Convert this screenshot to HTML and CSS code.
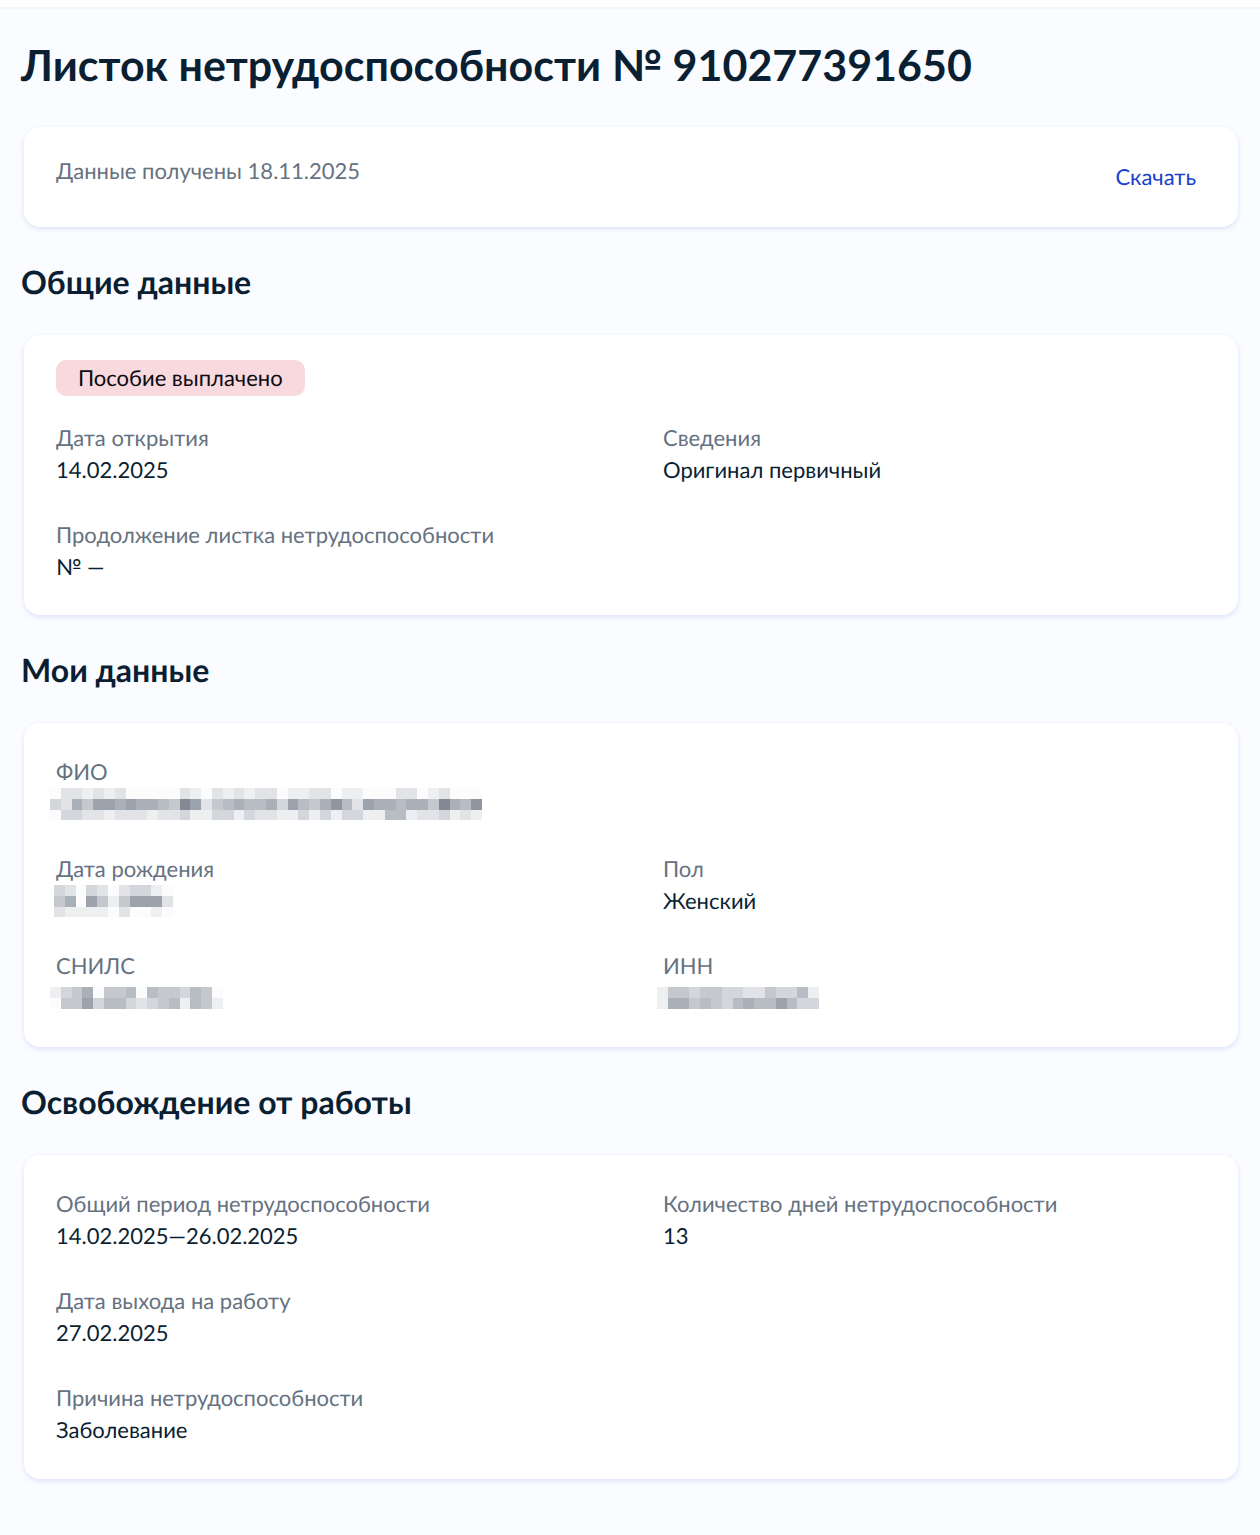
FILE: index.html
```html
<!DOCTYPE html>
<html lang="ru">

<head>
    <meta charset="UTF-8">
    <meta name="viewport" content="width=device-width, initial-scale=1.0">
    <title>Листок нетрудоспособности</title>
    <link rel="stylesheet" href="styles.css">
</head>

<body>
    <header class="topbar"></header>
    <main class="page">
        <h1>Листок нетрудоспособности № 910277391650</h1>

        <div class="card download">
            <p class="received">Данные получены 18.11.2025</p>
            <a class="download-link" href="#">Скачать</a>
        </div>

        <section>
            <h2>Общие данные</h2>
            <div class="card card-status">
                <span class="badge">Пособие выплачено</span>
                <dl class="fields">
                    <div class="field">
                        <dt>Дата открытия</dt>
                        <dd>14.02.2025</dd>
                    </div>
                    <div class="field">
                        <dt>Сведения</dt>
                        <dd>Оригинал первичный</dd>
                    </div>
                    <div class="field wide">
                        <dt>Продолжение листка нетрудоспособности</dt>
                        <dd>№ —</dd>
                    </div>
                </dl>
            </div>
        </section>

        <section>
            <h2>Мои данные</h2>
            <div class="card">
                <dl class="fields">
                    <div class="field wide">
                        <dt>ФИО</dt>
                        <dd><svg class="mosaic" id="name"></svg></dd>
                    </div>
                    <div class="field">
                        <dt>Дата рождения</dt>
                        <dd><svg class="mosaic mosaic-date" id="birthday"></svg></dd>
                    </div>
                    <div class="field">
                        <dt>Пол</dt>
                        <dd>Женский</dd>
                    </div>
                    <div class="field">
                        <dt>СНИЛС</dt>
                        <dd><svg class="mosaic" id="snils"></svg></dd>
                    </div>
                    <div class="field">
                        <dt>ИНН</dt>
                        <dd><svg class="mosaic" id="inn"></svg></dd>
                    </div>
                </dl>
            </div>
        </section>

        <section>
            <h2>Освобождение от работы</h2>
            <div class="card">
                <dl class="fields">
                    <div class="field">
                        <dt>Общий период нетрудоспособности</dt>
                        <dd>14.02.2025—26.02.2025</dd>
                    </div>
                    <div class="field">
                        <dt>Количество дней нетрудоспособности</dt>
                        <dd>13</dd>
                    </div>
                    <div class="field wide">
                        <dt>Дата выхода на работу</dt>
                        <dd>27.02.2025</dd>
                    </div>
                    <div class="field wide">
                        <dt>Причина нетрудоспособности</dt>
                        <dd>Заболевание</dd>
                    </div>
                </dl>
            </div>
        </section>
    </main>
    <script src="mosaic.js"></script>
</body>

</html>
```

FILE: styles.css
```css
* {
    margin: 0;
    padding: 0;
    box-sizing: border-box;
}

body {
    background-color: #fbfcff;
    color: #0b1f33;
    font-family: Lato, "Noto Sans", sans-serif;
    font-size: 22px;
    line-height: 32px;
    text-rendering: geometricPrecision;
}

/* нижний край шапки */
.topbar {
    height: 9px;
    background-color: #ffffff;
    border-bottom: 2px solid #f3f5fb;
}

.page {
    padding: 29px 22px 54px 21px;
}

h1 {
    font-size: 43px;
    line-height: 56px;
    margin-bottom: 33px;
}

h2 {
    font-size: 32px;
    line-height: 40px;
    margin: 35px 0 33px;
}

/* карточки */
.card {
    margin-left: 3px;
    padding: 33px 0;
    background-color: #ffffff;
    border-radius: 16px;
    box-shadow: 0 2px 5px rgba(70, 110, 220, 0.18);
}

.card-status {
    padding: 25px 0 32px;
}

.download {
    display: flex;
    justify-content: space-between;
    padding: 28px 42px 28px 32px;
}

.received {
    color: #66727f;
}

.download-link {
    color: #1a3fd0;
    line-height: 44px;
    text-decoration: none;
}

.badge {
    display: block;
    width: fit-content;
    margin: 0 32px 26px;
    padding: 2px 22px;
    border-radius: 10px;
    background-color: #f8d9dd;
    color: #0b0b12;
}

/* поля в две колонки */
.fields {
    display: grid;
    grid-template-columns: 1fr 1fr;
    row-gap: 33px;
}

.field {
    padding: 0 32px;
}

.wide {
    grid-column: span 2;
}

dt {
    color: #66727f;
}

dd {
    display: flex;
    align-items: center;
    height: 32px;
}

/* скрытые личные данные */
.mosaic {
    margin-left: -6px;
}

.mosaic-date {
    margin-left: -2px;
}

.mosaic rect {
    fill: #5f6978;
}
```

FILE: mosaic.js
```javascript
// плотность каждой клетки от 0 до 9
const masks = {
    name: [
        '0221212000002102121220112201100022012000',
        '3264776766549724565563754685276656649658',
        '0332212221223113313221131313311551223121'
    ],
    birthday: [
        '32032023310',
        '46074147772',
        '21111020010'
    ],
    snils: [
        '1346044505443540',
        '0447355323451541'
    ],
    inn: [
        '144344332243351',
        '166454356557533'
    ]
};

const cell = 10.8;

for (const id in masks) {
    const rows = masks[id];
    const svg = document.getElementById(id);
    svg.setAttribute('width', Math.round(rows[0].length * cell));
    svg.setAttribute('height', Math.round(rows.length * cell));
    svg.setAttribute('shape-rendering', 'crispEdges');

    rows.forEach((row, y) => {
        [...row].forEach((level, x) => {
            const rect = document.createElementNS('http://www.w3.org/2000/svg', 'rect');
            rect.setAttribute('x', x * cell);
            rect.setAttribute('y', y * cell);
            rect.setAttribute('width', cell);
            rect.setAttribute('height', cell);
            rect.setAttribute('fill-opacity', 0.02 + level * 0.085);
            svg.appendChild(rect);
        });
    });
}
```
